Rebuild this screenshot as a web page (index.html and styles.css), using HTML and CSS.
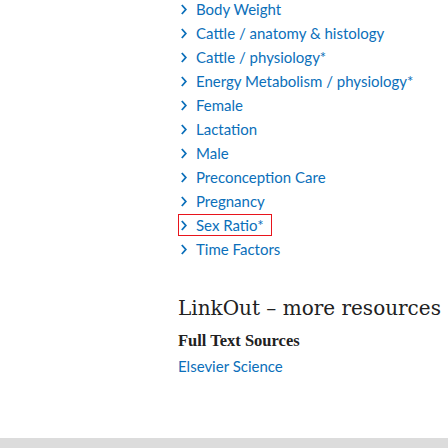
FILE: index.html
```html
<!DOCTYPE html>
<html>
<head>
<meta charset="utf-8">
<link rel="stylesheet" href="styles.css">
</head>
<body>
<div class="page">
  <main class="content">
    <ul class="terms">
      <li><a class="term" href="#"><svg class="chev" viewBox="0 0 6 11"><path d="M0.8 1l4 4.5-4 4.5"/></svg>Body Weight</a></li>
      <li><a class="term" href="#"><svg class="chev" viewBox="0 0 6 11"><path d="M0.8 1l4 4.5-4 4.5"/></svg>Cattle / anatomy &amp; histology</a></li>
      <li><a class="term" href="#"><svg class="chev" viewBox="0 0 6 11"><path d="M0.8 1l4 4.5-4 4.5"/></svg>Cattle / physiology*</a></li>
      <li><a class="term" href="#"><svg class="chev" viewBox="0 0 6 11"><path d="M0.8 1l4 4.5-4 4.5"/></svg>Energy Metabolism / physiology*</a></li>
      <li><a class="term" href="#"><svg class="chev" viewBox="0 0 6 11"><path d="M0.8 1l4 4.5-4 4.5"/></svg>Female</a></li>
      <li><a class="term" href="#"><svg class="chev" viewBox="0 0 6 11"><path d="M0.8 1l4 4.5-4 4.5"/></svg>Lactation</a></li>
      <li><a class="term" href="#"><svg class="chev" viewBox="0 0 6 11"><path d="M0.8 1l4 4.5-4 4.5"/></svg>Male</a></li>
      <li><a class="term" href="#"><svg class="chev" viewBox="0 0 6 11"><path d="M0.8 1l4 4.5-4 4.5"/></svg>Preconception Care</a></li>
      <li><a class="term" href="#"><svg class="chev" viewBox="0 0 6 11"><path d="M0.8 1l4 4.5-4 4.5"/></svg>Pregnancy</a></li>
      <li><a class="term focused" href="#"><svg class="chev" viewBox="0 0 6 11"><path d="M0.8 1l4 4.5-4 4.5"/></svg>Sex Ratio*</a></li>
      <li><a class="term" href="#"><svg class="chev" viewBox="0 0 6 11"><path d="M0.8 1l4 4.5-4 4.5"/></svg>Time Factors</a></li>
    </ul>
    <section class="linkout">
      <h2 class="linkout-title">LinkOut – more resources</h2>
      <h3 class="linkout-sub">Full Text Sources</h3>
      <a class="linkout-link" href="#">Elsevier Science</a>
    </section>
  </main>
  <footer class="band"></footer>
</div>
</body>
</html>
```
FILE: styles.css
```css
html, body {
  margin: 0;
  padding: 0;
  background: #fff;
}
.page {
  width: 448px;
  height: 448px;
  display: flex;
  flex-direction: column;
  overflow: hidden;
}
.content {
  flex: 1;
  padding-left: 178px;
  margin-top: -3px;
}
.terms {
  list-style: none;
  margin: 0;
  padding: 0;
}
.terms li {
  height: 24px;
  display: flex;
  align-items: center;
}
.term {
  display: inline-flex;
  align-items: center;
  gap: 9px;
  height: 22px;
  padding: 0 5px 0 3px;
  box-sizing: border-box;
  font-family: Lato, sans-serif;
  font-size: 15px;
  color: #0b6fba;
  text-decoration: none;
}
.chev {
  width: 6px;
  height: 11px;
  flex: none;
}
.chev path {
  fill: none;
  stroke: #0b6fba;
  stroke-width: 1.8;
}
.focused {
  border: 1px solid #e8141c;
  padding-left: 2px;
  padding-right: 7px;
}
.linkout {
  padding-top: 34px;
}
.linkout-title {
  margin: 0;
  font-family: "DejaVu Serif", serif;
  font-weight: normal;
  font-size: 20px;
  line-height: 26px;
  color: #212121;
}
.linkout-sub {
  margin: 10px 0 0;
  font-family: "Liberation Serif", serif;
  font-weight: bold;
  font-size: 16.5px;
  line-height: 20px;
  color: #212121;
}
.linkout-link {
  display: block;
  margin-top: 4px;
  font-family: Lato, sans-serif;
  font-size: 15px;
  line-height: 22px;
  color: #0b6fba;
  text-decoration: none;
}
.band {
  height: 10px;
  background: #dcdcdc;
  flex: none;
}
```
